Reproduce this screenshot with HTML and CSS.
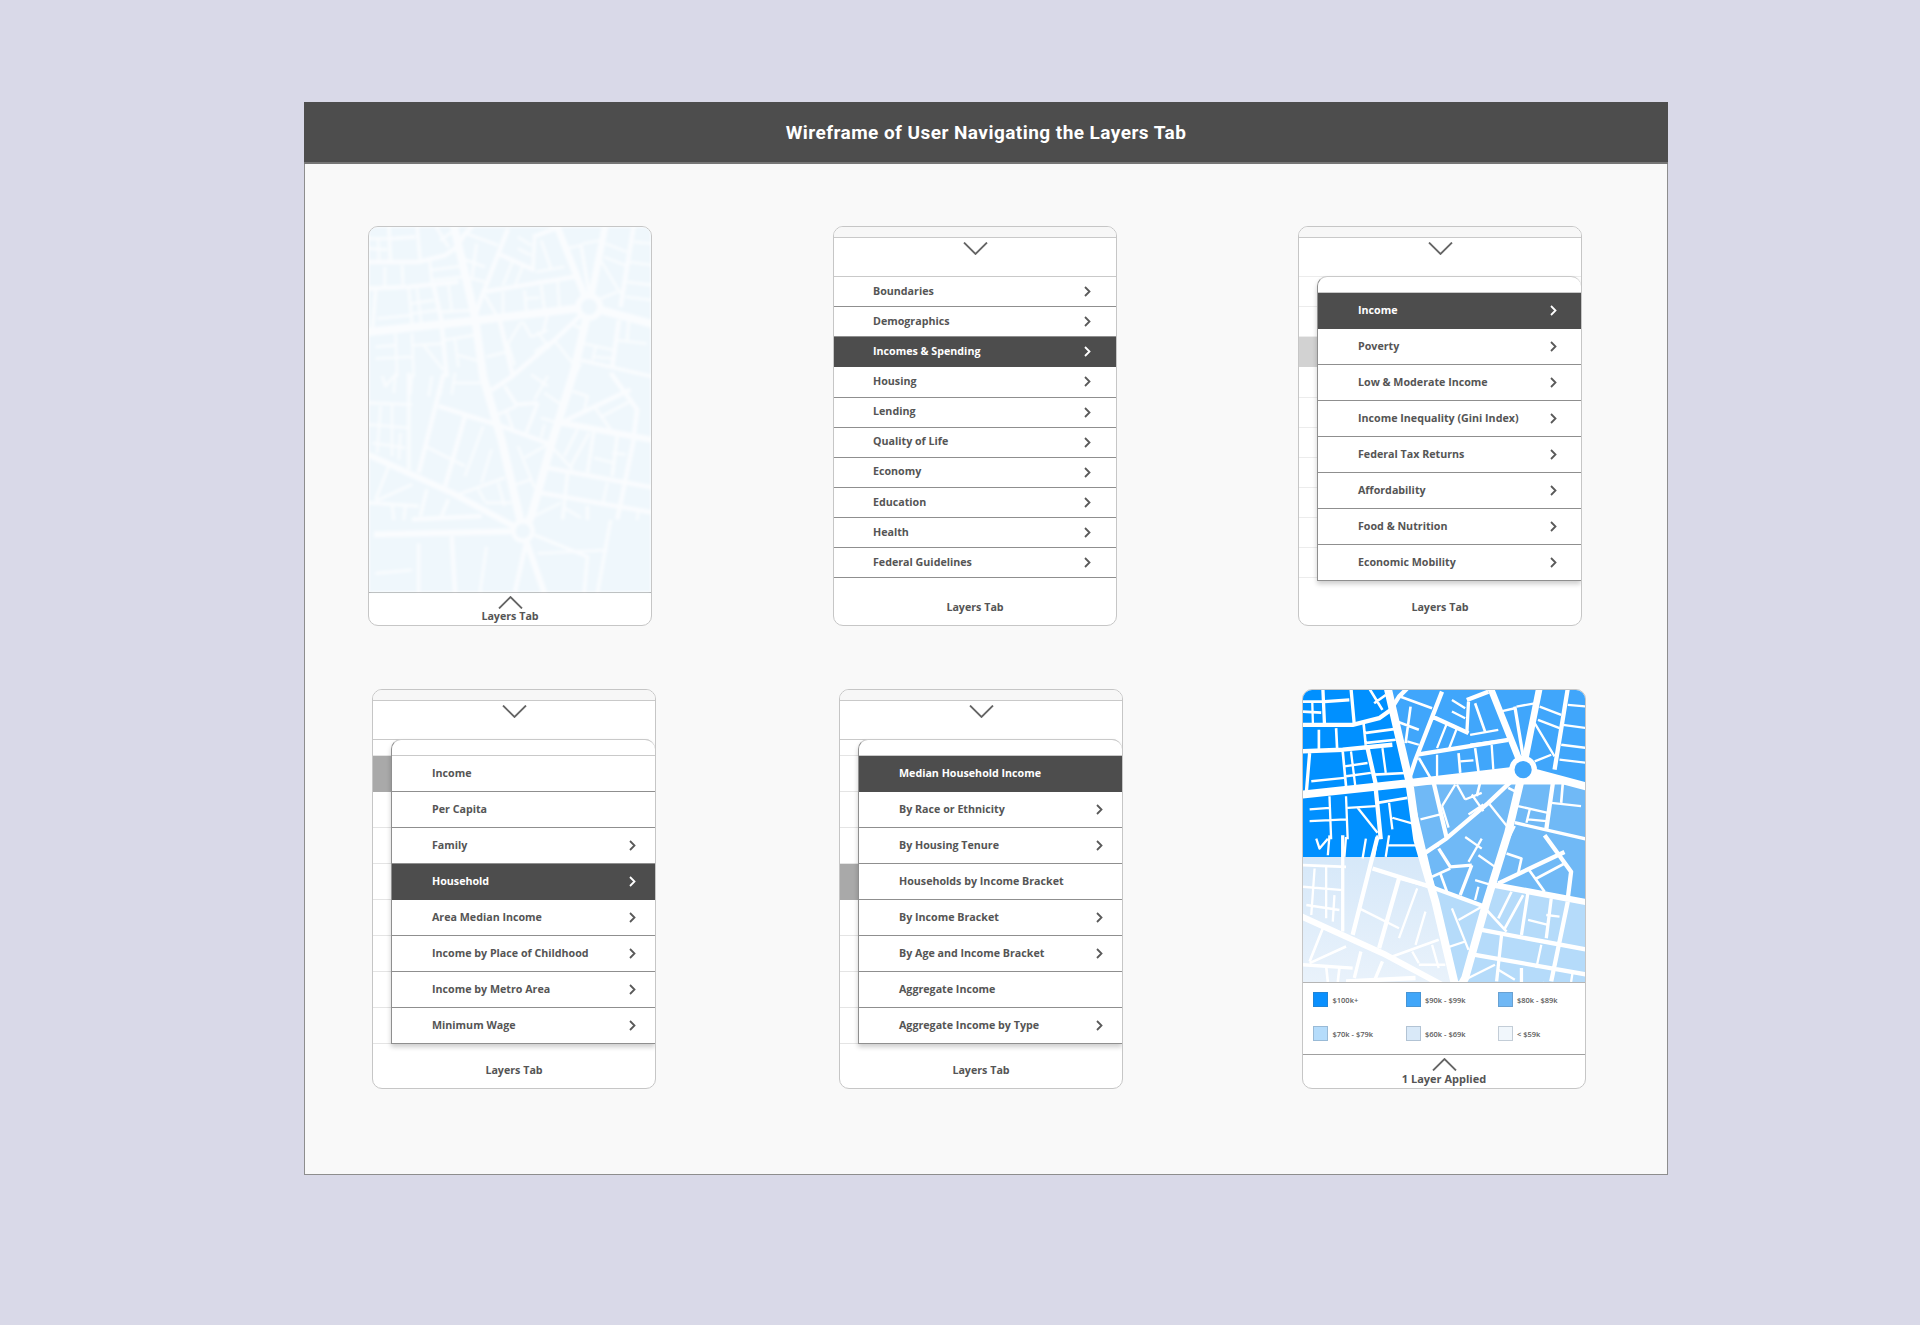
FILE: index.html
```html
<!DOCTYPE html>
<html lang="en">
<head>
<meta charset="utf-8">
<title>Wireframe of User Navigating the Layers Tab</title>
<link rel="stylesheet" href="styles.css">
</head>
<body>
<main class="frame">
  <header class="frame-head"><h1>Wireframe of User Navigating the Layers Tab</h1></header>
  <div class="frame-body">
    <div class="row row-a">
      <section class="phone">
        <svg class="map map-tall" viewBox="0 0 852 1096" preserveAspectRatio="none">
          <defs>
            <g id="roads" class="roads">
              <path class="w18" d="M-10 316 310 282 665 240 860 292M255 -10 320 270 345 450 400 638 465 913M665 240 620 430 555 638 490 868 465 913"/>
              <path class="w16" d="M665 240 565 -10M665 240 715 -10"/>
              <path class="w14" d="M-10 680 250 798 465 913M580 588 860 640M15 923 465 913M465 913 530 1100"/>
              <path class="w10" d="M-10 105 150 105 230 85 265 60 290 20 315 -5M-10 185 120 180 270 165M195 175 220 285M220 300 235 450M130 878 340 868M420 5 340 210 320 270M390 80 500 130M345 195 620 150M495 30 560 5M800 -5 760 240M395 280 435 450M640 265 560 340 430 450 370 490M755 280 735 420M590 583 790 488M730 438 810 548 800 628M210 538 400 598 550 653M290 568 230 778M225 443 150 738M800 638 750 878M540 723 860 783M520 798 860 858M490 880 440 1100M250 930 260 1100"/>
              <path class="w8" d="M60 -5 65 105M65 35 140 30M145 -5 155 105M20 190 10 310M640 50 665 200M500 35 495 130M640 400 860 450M120 438 120 728M175 788 155 868M240 818 215 878M0 828 150 838M600 738 585 878M680 608 660 738M750 628 735 748M660 838 660 880M150 950 150 1100M500 925 660 990 650 1100M730 880 690 1100M510 528 475 618M410 478 445 533 510 528"/>
              <path class="w6" d="M0 35 60 35M0 65 55 68M200 -5 240 60M215 40 250 15M185 130 275 118M185 160 280 150M48 120 48 180M100 115 103 175M183 100 190 170M120 185 130 290M215 255 310 250M225 340 315 325M270 90 350 120M325 50 310 160M295 20 390 55M350 205 385 265M470 190 475 250M520 175 530 245M520 40 550 125M540 260 525 320M620 295 650 310M785 280 780 340M780 165 860 175M0 528 130 533M290 568 400 598M270 803 410 753M350 828 430 828M60 718 20 818M20 823 130 773M70 833 75 880M110 838 105 880M680 538 730 608M705 568 790 523M615 493 660 508 650 553M415 553 435 608M390 563 445 538M555 663 615 728M630 608 590 688M665 618 610 718M355 960 335 1100M20 1040 130 1030"/>
              <path class="w5" d="M28 35 30 105M145 185 158 290M240 175 250 250M125 230 195 220M130 260 205 250M25 275 125 265M80 320 85 450M20 360 80 355M20 395 130 390M130 320 135 450M135 355 220 350M165 355 225 430M260 340 270 420M270 385 340 405M80 438 75 498M130 443 125 503M40 448 50 478 75 448M190 448 180 508M225 438 215 503M260 438 250 503M255 468 350 468M0 593 120 603M10 648 110 663M35 538 25 678M70 533 70 688M95 618 90 698M170 658 290 718M345 598 290 748M370 668 340 768M330 788 350 823M390 768 410 838M315 155 350 165M435 100 405 175M465 115 440 180M450 30 490 55M450 65 490 85M505 135 590 120M505 165 620 150M405 195 405 260M570 165 575 240M475 215 515 212M595 65 640 55M645 50 700 40M715 50 780 75M710 90 775 115M700 100 760 200M700 215 750 195M800 45 860 50M785 105 860 115M775 210 860 220M465 285 490 330M460 285 420 350M490 330 540 310M355 390 415 375M420 350 440 415M510 315 545 365M500 375 545 345M560 340 620 415M650 350 740 370M685 360 675 400M680 390 735 395M750 340 840 350M640 410 620 450M370 488 410 468M490 443 540 478M540 448 500 518M530 498 580 533M520 573 570 588M530 593 520 633M450 658 500 783M470 693 540 653M430 778 490 758M680 693 740 708M735 678 775 683M720 768 705 838M500 868 580 828M590 843 640 873M815 848 810 880M510 980 720 970"/>
              <circle class="hub" cx="665" cy="240" r="42"/>
              <circle class="hub" cx="465" cy="913" r="36"/>
            </g>
          </defs>
          <rect class="map-faint" width="852" height="1096"/>
          <use class="roads-soft" href="#roads"/>
          <circle class="map-faint" cx="665" cy="240" r="24"/>
          <circle class="map-faint" cx="465" cy="913" r="22"/>
        </svg>
        <div class="foot foot-up">
          <svg class="chev-big" viewBox="0 0 25 13"><path d="M1 12.5 12.5 1 24 12.5"/></svg>
          <span class="foot-label">Layers Tab</span>
        </div>
      </section>

      <section class="phone phone-b">
        <div class="phone-top"></div>
        <div class="phone-handle"><svg class="chev-big" viewBox="0 0 25 13"><path d="M1 .5 12.5 12 24 .5"/></svg></div>
        <ul class="rows">
          <li>Boundaries<svg class="chev" viewBox="0 0 7 11"><path d="M1 1 5.5 5.5 1 10"/></svg></li>
          <li>Demographics<svg class="chev" viewBox="0 0 7 11"><path d="M1 1 5.5 5.5 1 10"/></svg></li>
          <li class="on">Incomes &amp; Spending<svg class="chev" viewBox="0 0 7 11"><path d="M1 1 5.5 5.5 1 10"/></svg></li>
          <li>Housing<svg class="chev" viewBox="0 0 7 11"><path d="M1 1 5.5 5.5 1 10"/></svg></li>
          <li>Lending<svg class="chev" viewBox="0 0 7 11"><path d="M1 1 5.5 5.5 1 10"/></svg></li>
          <li>Quality of Life<svg class="chev" viewBox="0 0 7 11"><path d="M1 1 5.5 5.5 1 10"/></svg></li>
          <li>Economy<svg class="chev" viewBox="0 0 7 11"><path d="M1 1 5.5 5.5 1 10"/></svg></li>
          <li>Education<svg class="chev" viewBox="0 0 7 11"><path d="M1 1 5.5 5.5 1 10"/></svg></li>
          <li>Health<svg class="chev" viewBox="0 0 7 11"><path d="M1 1 5.5 5.5 1 10"/></svg></li>
          <li>Federal Guidelines<svg class="chev" viewBox="0 0 7 11"><path d="M1 1 5.5 5.5 1 10"/></svg></li>
        </ul>
        <div class="foot foot-plain"><span class="foot-label">Layers Tab</span></div>
      </section>

      <section class="phone phone-c">
        <div class="phone-top"></div>
        <div class="phone-handle"><svg class="chev-big" viewBox="0 0 25 13"><path d="M1 .5 12.5 12 24 .5"/></svg></div>
        <ul class="rows rows-ghost">
          <li></li><li></li><li class="dim"></li><li></li><li></li><li></li><li></li><li></li><li></li><li></li>
        </ul>
        <div class="foot foot-plain"><span class="foot-label">Layers Tab</span></div>
        <div class="panel">
          <ul class="panel-rows">
            <li class="on">Income<svg class="chev" viewBox="0 0 7 11"><path d="M1 1 5.5 5.5 1 10"/></svg></li>
            <li>Poverty<svg class="chev" viewBox="0 0 7 11"><path d="M1 1 5.5 5.5 1 10"/></svg></li>
            <li>Low &amp; Moderate Income<svg class="chev" viewBox="0 0 7 11"><path d="M1 1 5.5 5.5 1 10"/></svg></li>
            <li>Income Inequality (Gini Index)<svg class="chev" viewBox="0 0 7 11"><path d="M1 1 5.5 5.5 1 10"/></svg></li>
            <li>Federal Tax Returns<svg class="chev" viewBox="0 0 7 11"><path d="M1 1 5.5 5.5 1 10"/></svg></li>
            <li>Affordability<svg class="chev" viewBox="0 0 7 11"><path d="M1 1 5.5 5.5 1 10"/></svg></li>
            <li>Food &amp; Nutrition<svg class="chev" viewBox="0 0 7 11"><path d="M1 1 5.5 5.5 1 10"/></svg></li>
            <li>Economic Mobility<svg class="chev" viewBox="0 0 7 11"><path d="M1 1 5.5 5.5 1 10"/></svg></li>
          </ul>
        </div>
      </section>
    </div>

    <div class="row row-b">
      <section class="phone phone-d">
        <div class="phone-top"></div>
        <div class="phone-handle"><svg class="chev-big" viewBox="0 0 25 13"><path d="M1 .5 12.5 12 24 .5"/></svg></div>
        <div class="foot foot-plain"><span class="foot-label">Layers Tab</span></div>
        <div class="panel panel-under">
          <ul class="panel-rows panel-ghost">
            <li class="grey"></li><li></li><li></li><li></li><li></li><li></li><li></li><li></li>
          </ul>
        </div>
        <div class="panel">
          <ul class="panel-rows">
            <li>Income</li>
            <li>Per Capita</li>
            <li>Family<svg class="chev" viewBox="0 0 7 11"><path d="M1 1 5.5 5.5 1 10"/></svg></li>
            <li class="on">Household<svg class="chev" viewBox="0 0 7 11"><path d="M1 1 5.5 5.5 1 10"/></svg></li>
            <li>Area Median Income<svg class="chev" viewBox="0 0 7 11"><path d="M1 1 5.5 5.5 1 10"/></svg></li>
            <li>Income by Place of Childhood<svg class="chev" viewBox="0 0 7 11"><path d="M1 1 5.5 5.5 1 10"/></svg></li>
            <li>Income by Metro Area<svg class="chev" viewBox="0 0 7 11"><path d="M1 1 5.5 5.5 1 10"/></svg></li>
            <li>Minimum Wage<svg class="chev" viewBox="0 0 7 11"><path d="M1 1 5.5 5.5 1 10"/></svg></li>
          </ul>
        </div>
      </section>

      <section class="phone phone-d">
        <div class="phone-top"></div>
        <div class="phone-handle"><svg class="chev-big" viewBox="0 0 25 13"><path d="M1 .5 12.5 12 24 .5"/></svg></div>
        <div class="foot foot-plain"><span class="foot-label">Layers Tab</span></div>
        <div class="panel panel-under">
          <ul class="panel-rows panel-ghost">
            <li></li><li></li><li></li><li class="grey"></li><li></li><li></li><li></li><li></li>
          </ul>
        </div>
        <div class="panel">
          <ul class="panel-rows">
            <li class="on">Median Household Income</li>
            <li>By Race or Ethnicity<svg class="chev" viewBox="0 0 7 11"><path d="M1 1 5.5 5.5 1 10"/></svg></li>
            <li>By Housing Tenure<svg class="chev" viewBox="0 0 7 11"><path d="M1 1 5.5 5.5 1 10"/></svg></li>
            <li>Households by Income Bracket</li>
            <li>By Income Bracket<svg class="chev" viewBox="0 0 7 11"><path d="M1 1 5.5 5.5 1 10"/></svg></li>
            <li>By Age and Income Bracket<svg class="chev" viewBox="0 0 7 11"><path d="M1 1 5.5 5.5 1 10"/></svg></li>
            <li>Aggregate Income</li>
            <li>Aggregate Income by Type<svg class="chev" viewBox="0 0 7 11"><path d="M1 1 5.5 5.5 1 10"/></svg></li>
          </ul>
        </div>
      </section>

      <section class="phone phone-f">
        <svg class="map map-short" viewBox="0 0 852 880" preserveAspectRatio="none">
          <defs>
            <linearGradient id="fade" x1="0" y1="0" x2="0" y2="1">
              <stop offset="0" stop-color="#d6e8f9"/>
              <stop offset="1" stop-color="#e9f2fb"/>
            </linearGradient>
          </defs>
          <polygon class="z1" points="0,0 265,0 325,280 352,503 0,503"/>
          <polygon class="z2" points="265,0 852,0 852,292 665,240 320,282"/>
          <polygon class="z3" points="325,285 852,285 852,638 580,588 545,650 400,603"/>
          <polygon class="z4" points="400,603 545,650 580,588 852,638 852,880 455,880"/>
          <polygon class="z5" points="0,503 352,503 400,603 455,880 0,880"/>
          <use href="#roads"/>
          <circle class="z2" cx="665" cy="240" r="26"/>
        </svg>
        <div class="legend">
          <div class="legend-item"><i class="sw sw1"></i>$100k+</div>
          <div class="legend-item"><i class="sw sw2"></i>$90k - $99k</div>
          <div class="legend-item"><i class="sw sw3"></i>$80k - $89k</div>
          <div class="legend-item"><i class="sw sw4"></i>$70k - $79k</div>
          <div class="legend-item"><i class="sw sw5"></i>$60k - $69k</div>
          <div class="legend-item"><i class="sw sw6"></i>&lt; $59k</div>
        </div>
        <div class="foot foot-up foot-low">
          <svg class="chev-big" viewBox="0 0 25 13"><path d="M1 12.5 12.5 1 24 12.5"/></svg>
          <span class="foot-label foot-wide">1 Layer Applied</span>
        </div>
      </section>
    </div>
  </div>
</main>
</body>
</html>
```
FILE: styles.css
```css
* { box-sizing: border-box; }
html, body { margin: 0; padding: 0; }
body {
  width: 1920px;
  height: 1325px;
  overflow: hidden;
  background: #d9d9e8;
  padding: 102px 0 0 304px;
  font-family: "Open Sans", "Liberation Sans", sans-serif;
}
.frame {
  width: 1364px;
  height: 1073px;
  border: 1px solid #8e8e8e;
  border-top: 0;
  background: #f9f9f9;
  display: flex;
  flex-direction: column;
}
.frame-head {
  height: 62px;
  flex: none;
  margin: 0 -1px;
  background: #4d4d4d;
  border-bottom: 2px solid #767676;
  display: flex;
  align-items: center;
  justify-content: center;
}
.frame-head h1 {
  margin: 0;
  color: #fff;
  font: 700 19px/1 Roboto, sans-serif;
  letter-spacing: .45px;
}
.frame-body {
  padding-top: 62px;
  display: flex;
  flex-direction: column;
  gap: 63px;
}
.row { display: flex; }
.row-a { padding-left: 63px; gap: 181px; }
.row-b { padding-left: 67px; gap: 183px; }
.row-b .phone-f { margin-left: -4px; }

.phone {
  position: relative;
  width: 284px;
  height: 400px;
  background: #fff;
  border: 1px solid #c6c6c6;
  border-radius: 10px;
  overflow: hidden;
  display: flex;
  flex-direction: column;
}
.phone-top {
  height: 11px;
  flex: none;
  background: #f7f7f7;
  border-bottom: 1px solid #c9c9c9;
}
.phone-handle {
  height: 38px;
  flex: none;
  padding-top: 4px;
  display: flex;
  justify-content: center;
  align-items: flex-start;
}
.chev-big { width: 25px; height: 13px; flex: none; }
.chev-big path { fill: none; stroke: #666; stroke-width: 1.8; }

.rows, .panel-rows { list-style: none; margin: 0; padding: 0; }
.rows { border-top: 1px solid #c9c9c9; }
.rows li {
  height: 30.15px;
  padding: 0 25px 2px 39px;
  border-bottom: 1px solid #8f8f8f;
}
.rows li, .panel-rows li {
  display: flex;
  align-items: center;
  justify-content: space-between;
  color: #555;
  font-size: 10.7px;
  font-weight: 700;
}
.rows li.on, .panel-rows li.on { background: #4d4d4d; color: #fff; border-color: #4d4d4d; }
.chev { width: 7px; height: 11px; flex: none; margin-top: 2px; }
.chev path { fill: none; stroke: #595959; stroke-width: 1.8; }
.on .chev path { stroke: #fff; }

.rows-ghost { border-top-color: #ececec; }
.rows-ghost li { border-bottom-color: #ececec; }
.rows-ghost li.dim { background: #d2d2d2; border-color: #d2d2d2; }

.foot { flex: none; display: flex; align-items: center; }
.foot-plain { margin-top: auto; height: 37px; justify-content: center; }
.foot-up {
  margin-top: auto;
  height: 34px;
  border-top: 1px solid #a0a0a0;
  flex-direction: column;
  padding-top: 3px;
}
.foot-low { gap: 1px; }
.foot-label {
  color: #555;
  font-size: 10.7px;
  font-weight: 700;
  line-height: 14px;
}
.foot-wide { font-size: 11px; }

.panel {
  position: absolute;
  top: 49px;
  left: 18px;
  right: 0;
  padding-top: 15px;
  background: #fff;
  border: 1px solid #c9c9c9;
  border-left-color: #8f8f8f;
  border-right: 0;
  border-bottom: 0;
  border-top-left-radius: 10px;
  border-top-right-radius: 10px;
  box-shadow: 0 3px 5px rgba(0, 0, 0, .2);
}
.panel-under {
  left: 0;
  border-left: 0;
  border-top-left-radius: 0;
  box-shadow: none;
}
.panel-rows { border-top: 1px solid #c9c9c9; }
.panel-rows li {
  height: 36px;
  padding: 0 24px 2px 40px;
  border-bottom: 1px solid #8f8f8f;
}
.phone-d .panel-rows li { padding-right: 19px; }
.panel-ghost { border-top-color: #e4e4e4; }
.panel-ghost li { border-bottom-color: #e4e4e4; }
.panel-ghost li.grey { background: #a9a9a9; border-color: #a9a9a9; }

.map { display: block; width: 100%; flex: none; }
.map-tall { height: 365px; filter: blur(1.4px); }
.map-short { height: 292px; filter: blur(.4px); }
.map-faint { fill: #eff7fc; }
.roads-soft { opacity: .72; }
.z1 { fill: #0090ff; }
.z2 { fill: #40a6fb; }
.z3 { fill: #70b9f6; }
.z4 { fill: #b5dbfa; }
.z5 { fill: url(#fade); }
.roads path { fill: none; stroke: #fff; stroke-linecap: butt; stroke-linejoin: round; }
.roads .hub { fill: #fff; }
.w18 { stroke-width: 24; }
.w16 { stroke-width: 20; }
.w14 { stroke-width: 18; }
.w10 { stroke-width: 13; }
.w8 { stroke-width: 10; }
.w6 { stroke-width: 8; }
.w5 { stroke-width: 7; }

.legend {
  height: 72px;
  flex: none;
  border-top: 1px solid #b5b5b5;
  padding: 9px 0 0 10px;
  display: grid;
  grid-template-columns: 92.5px 92px 1fr;
  grid-auto-rows: 15px;
  row-gap: 19px;
}
.legend-item {
  display: flex;
  align-items: center;
  gap: 4.5px;
  color: #5c5c5c;
  font-size: 7.5px;
  font-weight: 600;
}
.sw { width: 15px; height: 15px; border: 1px solid rgba(90, 110, 130, .3); flex: none; }
.sw1 { background: #0a90fe; }
.sw2 { background: #40a6f9; }
.sw3 { background: #70b8f5; }
.sw4 { background: #b5dcfb; }
.sw5 { background: #d9e9f8; }
.sw6 { background: #f1f7fc; }
```
